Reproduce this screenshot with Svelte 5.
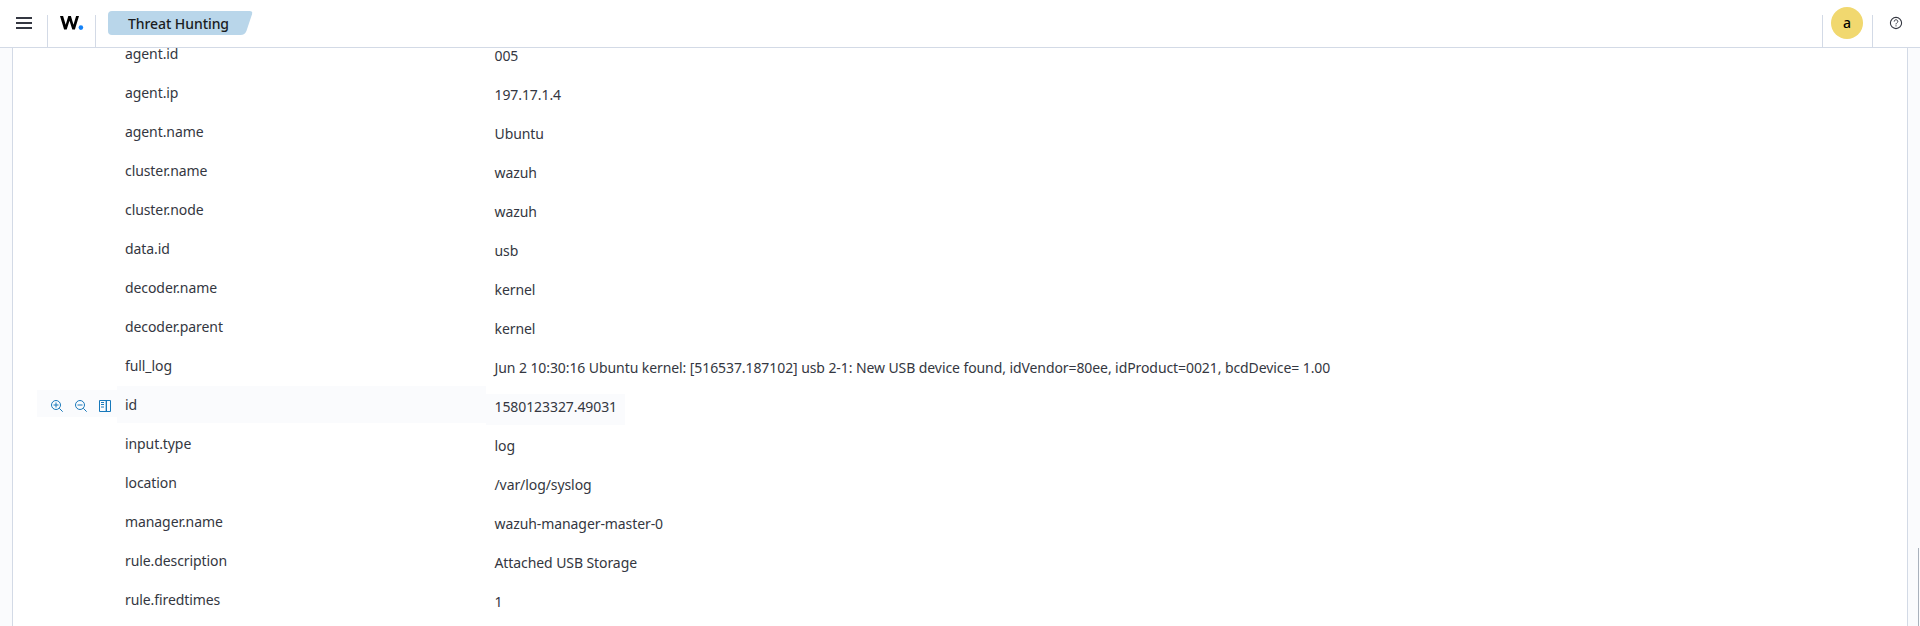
<script>
  const rows = [
    ['agent.id', '005'],
    ['agent.ip', '197.17.1.4'],
    ['agent.name', 'Ubuntu'],
    ['cluster.name', 'wazuh'],
    ['cluster.node', 'wazuh'],
    ['data.id', 'usb'],
    ['decoder.name', 'kernel'],
    ['decoder.parent', 'kernel'],
    ['full_log', 'Jun 2 10:30:16 Ubuntu kernel: [516537.187102] usb 2-1: New USB device found, idVendor=80ee, idProduct=0021, bcdDevice= 1.00'],
    ['id', '1580123327.49031'],
    ['input.type', 'log'],
    ['location', '/var/log/syslog'],
    ['manager.name', 'wazuh-manager-master-0'],
    ['rule.description', 'Attached USB Storage'],
    ['rule.firedtimes', '1'],
  ];
  const active = 'id';
</script>

<div class="app">
  <header>
    <button class="menu" aria-label="Menu">
      <svg width="16" height="12" viewBox="0 0 16 12"><path d="M0 0h16v2H0zM0 5h16v2H0zM0 10h16v2H0z" fill="#343741" /></svg>
    </button>
    <div class="logo">
      <svg width="24" height="14" viewBox="0 0 24 14">
        <path d="M0 0H3.1L5.7 8.7L8.3 0H10.9L13.5 8.7L16.1 0H19L14.9 13.5H12.3L9.5 4.8L6.7 13.5H4.1Z" fill="#000" />
        <circle cx="20.9" cy="11.6" r="2.3" fill="#1381f7" />
      </svg>
    </div>
    <div class="crumb">
      <svg width="145" height="24" viewBox="0 0 145 24"><path d="M4 0H141.5Q145 0 144 3.2L138.6 19.5Q137 24 132.5 24H4Q0 24 0 20V4Q0 0 4 0Z" fill="#b9d6ea" /></svg>
      <span>Threat Hunting</span>
    </div>
    <div class="spacer"></div>
    <div class="user"><span class="avatar">a</span></div>
    <div class="help">
      <svg width="14" height="14" viewBox="0 0 14 14" fill="none" stroke="#343741">
        <circle cx="7" cy="7" r="5.6" stroke-width="1.1" />
        <path d="M5.2 5.6C5.2 4.4 6 3.8 7 3.8S8.8 4.5 8.8 5.5C8.8 6.8 7 6.8 7 8.4" />
        <path d="M7 9.3V10.4" />
      </svg>
    </div>
  </header>
  <main>
    <section>
      <div class="table">
        {#each rows as [name, value]}
          <div class="row" class:active={name === active}>
            <div class="tools">
              {#if name === active}
                <svg width="12" height="12" viewBox="0 0 12 12"><circle cx="5" cy="5" r="4.5" /><path d="M8.3 8.3L11.7 11.7M2.5 5H7.5M5 2.5V7.5" /></svg>
                <svg width="12" height="12" viewBox="0 0 12 12"><circle cx="5" cy="5" r="4.5" /><path d="M8.3 8.3L11.7 11.7M2.5 5H7.5" /></svg>
                <svg width="12" height="12" viewBox="0 0 12 12"><path d="M.5 .5H11.5V11.5H.5ZM7.5 .5V11.5M2 2.5H5M2 4.5H5M2 7H5" /><path d="M6.5 1V11" stroke-opacity=".35" /></svg>
              {/if}
            </div>
            <div class="name">{name}</div>
            <div class="value">{value}</div>
          </div>
        {/each}
      </div>
    </section>
    <div class="scroll"></div>
  </main>
</div>

<style>
  .app {
    width: 1920px;
    height: 626px;
    overflow: hidden;
    display: flex;
    flex-direction: column;
    background: #fafbfd;
    color: #343741;
    font: 14px/21px "Noto Sans", sans-serif;
  }
  header {
    box-sizing: border-box;
    height: 48px;
    flex: none;
    display: flex;
    align-items: flex-end;
    background: #fff;
    border-bottom: 1px solid #d3dae6;
  }
  .menu, .logo, .user, .help {
    box-sizing: border-box;
    height: 32px;
    padding: 0;
    display: flex;
  }
  .menu {
    width: 47px;
    border: 0;
    background: none;
    padding: 2px 0 0 16px;
  }
  .logo {
    width: 49px;
    border: solid #d3dae6;
    border-width: 0 1px;
    padding: 1px 0 0 12px;
  }
  .crumb {
    display: grid;
    margin: 0 0 12px 12px;
    font-weight: 500;
    color: #1a1c21;
    line-height: 26px;
    height: 24px;
    letter-spacing: -.005em;
  }
  .crumb > * { grid-area: 1 / 1; }
  .crumb span { padding-left: 20px; position: relative; }
  .spacer { flex: 1; }
  .user {
    width: 51px;
    height: 32px;
    border: solid #d3dae6;
    border-width: 0 1px;
    padding-left: 8px;
  }
  .avatar {
    width: 32px;
    height: 32px;
    margin-top: -8px;
    border-radius: 50%;
    background: #f1d86f;
    color: #000;
    font-weight: 500;
    line-height: 32px;
    text-align: center;
  }
  .help { width: 47px; padding: 1px 0 0 16px; }
  main { flex: 1; display: flex; min-height: 0; }
  section {
    flex: 1;
    margin: 0 0 0 12px;
    background: #fff;
    border: solid #d3dae6;
    border-width: 0 1px;
    overflow: hidden;
  }
  .table { margin: -13px 0 0 24px; letter-spacing: -.006em; }
  .row {
    display: grid;
    grid-template-columns: 80px 369px max-content;
    height: 39px;
  }
  .tools {
    display: flex;
    gap: 12px;
    height: 27px;
    margin-top: 4px;
    padding: 10px 0 0 14px;
    box-sizing: border-box;
  }
  .tools svg { fill: none; stroke: #006bb4; stroke-width: 1; opacity: .9; }
  .name { height: 29px; padding: 8px 8px 0; }
  .value { height: 23px; margin-top: 8px; padding: 2px 8px 6px 8.5px; }
  .active > div { background: #fafbfd; }
  .scroll { width: 12px; display: flex; justify-content: flex-end; }
  .scroll::after { content: ""; width: 1px; margin: 500px 1px 0 0; background: #a9b1bc; }
</style>
